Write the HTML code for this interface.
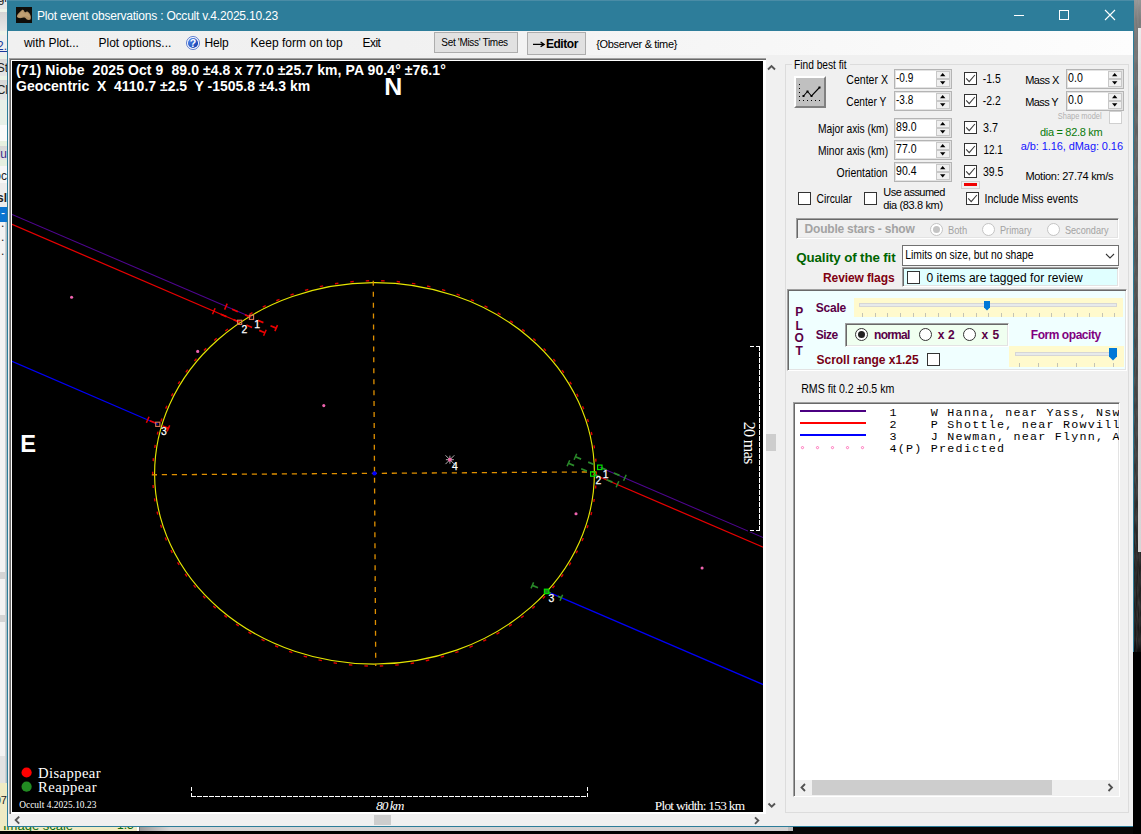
<!DOCTYPE html>
<html>
<head>
<meta charset="utf-8">
<title>Plot event observations</title>
<style>
html,body{margin:0;padding:0;}
body{width:1141px;height:834px;overflow:hidden;position:relative;background:#f0f0f0;font-family:"Liberation Sans",sans-serif;font-size:11px;color:#000;}
.abs{position:absolute;}
svg{position:absolute;overflow:visible;}
text{white-space:pre;}
</style>
</head>
<body>
<div class="abs" style="left:0px;top:0px;width:7px;height:9px;background:#e6e6e6;"></div>
<div class="abs" style="left:0px;top:9px;width:7px;height:3px;background:#eef4ea;"></div>
<div class="abs" style="left:0px;top:12px;width:7px;height:19px;background:linear-gradient(#d4d4d4,#e8e8e8);"></div>
<div class="abs" style="left:0px;top:31px;width:7px;height:4px;background:#eef4ea;"></div>
<div class="abs" style="left:0px;top:35px;width:7px;height:20px;background:#eeeeee;"></div>
<div class="abs" style="left:0px;top:55px;width:7px;height:4px;background:#eaf2e6;"></div>
<div class="abs" style="left:0px;top:59px;width:7px;height:17px;background:linear-gradient(#d8d8d8,#e6e6e6);"></div>
<div class="abs" style="left:0px;top:76px;width:7px;height:4px;background:#eaf2e6;"></div>
<div class="abs" style="left:0px;top:80px;width:7px;height:20px;background:linear-gradient(#d8d8d8,#e6e6e6);"></div>
<div class="abs" style="left:0px;top:100px;width:7px;height:25px;background:#e8f0e8;"></div>
<div class="abs" style="left:0px;top:125px;width:7px;height:16px;background:#fafafa;"></div>
<div class="abs" style="left:0px;top:141px;width:7px;height:5px;background:#e6f0e0;"></div>
<div class="abs" style="left:0px;top:146px;width:7px;height:14px;background:linear-gradient(#d6d6d6,#e4e4e4);"></div>
<div class="abs" style="left:0px;top:160px;width:7px;height:6px;background:#e6f0e0;"></div>
<div class="abs" style="left:0px;top:166px;width:7px;height:17px;background:#f6f6f6;"></div>
<div class="abs" style="left:0px;top:183px;width:7px;height:24px;background:#ececec;"></div>
<div class="abs" style="left:0px;top:207px;width:7px;height:15px;background:#0a74d0;"></div>
<div class="abs" style="left:0px;top:222px;width:7px;height:350px;background:#f3f3f3;"></div>
<div class="abs" style="left:0px;top:572px;width:7px;height:7px;background:#d4d4d4;"></div>
<div class="abs" style="left:0px;top:579px;width:7px;height:36px;background:#f3f3f3;"></div>
<div class="abs" style="left:0px;top:615px;width:7px;height:7px;background:#d4d4d4;"></div>
<div class="abs" style="left:0px;top:622px;width:7px;height:134px;background:#f3f3f3;"></div>
<div class="abs" style="left:0px;top:756px;width:7px;height:27px;background:#e2e2e2;"></div>
<div class="abs" style="left:0px;top:783px;width:7px;height:48px;background:#efebc4;"></div>
<div class="abs" style="left:5px;top:222px;width:2px;height:561px;background:linear-gradient(90deg,#dcdcdc,#9fb4bc);"></div>
<div class="abs" style="left:0;top:0;width:7px;height:834px;overflow:hidden;font-family:'Liberation Sans';font-size:12px;line-height:1;color:#222;white-space:nowrap;"><span style="position:absolute;right:0;top:-8px;">gi</span><span style="position:absolute;right:0;top:40px;color:#1a3a9a;text-decoration:underline;">2.</span><span style="position:absolute;right:-1px;top:62px;">St</span><span style="position:absolute;right:-1px;top:84px;">Cl</span><span style="position:absolute;right:0;top:148px;color:#3a2a8a;">clu</span><span style="position:absolute;right:0;top:170px;">oc</span><span style="position:absolute;right:0;top:192px;font-weight:bold;">sl</span><span style="position:absolute;left:1px;top:207px;color:#fff;">-</span><span style="position:absolute;left:1px;top:217px;">.</span><span style="position:absolute;left:1px;top:231px;">.</span><span style="position:absolute;left:1px;top:245px;">.</span><span style="position:absolute;right:0;top:795px;font-size:11px;">07</span></div>
<div class="abs" style="left:0px;top:831px;width:1141px;height:3px;background:#000;"></div>
<div class="abs" style="left:0px;top:827px;width:137px;height:4px;background:#efebc4;"></div>
<div class="abs" style="left:137px;top:827px;width:3px;height:4px;background:linear-gradient(90deg,#fff 0,#fff 50%,#777 51%);"></div>
<div class="abs" style="left:140px;top:827px;width:648px;height:4px;background:linear-gradient(90deg,#9a9a9a 0,#d6d6d6 30px,#d2d2d2 100%);"></div>
<div class="abs" style="left:788px;top:827px;width:5px;height:4px;background:#bdbdbd;"></div>
<div class="abs" style="left:793px;top:826px;width:348px;height:8px;background:#060606;"></div>
<div class="abs" style="left:0px;top:826px;width:138px;height:5px;overflow:hidden;font-family:'Liberation Sans';font-size:12px;line-height:1;color:#0a6a0a;white-space:nowrap;"><span style="position:absolute;left:3px;top:-7px;font-size:13px;">Image scale</span><span style="position:absolute;left:117px;top:-7px;">1.3</span></div>
<div class="abs" style="left:1133px;top:652px;width:8px;height:182px;background:#000;"></div>
<div class="abs" style="left:1134px;top:0px;width:7px;height:652px;background:linear-gradient(#969696 0,#7a7a7a 20px,#646464 100px,#525252 250px,#3a3a3a 450px,#222 552px,#1a1a1a 640px,#000 652px);"></div>
<svg style="left:1134px;top:0" width="7" height="652"><filter id="nz" x="0" y="0" width="100%" height="100%"><feTurbulence type="fractalNoise" baseFrequency="0.9 0.08" numOctaves="2" seed="3"/><feColorMatrix type="matrix" values="0 0 0 0 0.5  0 0 0 0 0.5  0 0 0 0 0.5  0.9 0 0 0 -0.25"/></filter><rect width="7" height="652" filter="url(#nz)" opacity="0.35"/></svg>
<div class="abs" style="left:1138px;top:28px;width:3px;height:524px;background:linear-gradient(#ececec 0,#e2e2e2 40px,#d6d6d6 100%);"></div>
<div class="abs" style="left:7px;top:0px;width:1127px;height:31px;background:#2d7d9a;"></div>
<div class="abs" style="left:7px;top:0px;width:1127px;height:1px;background:#4a8ca6;"></div>
<div class="abs" style="left:7px;top:31px;width:1127px;height:621px;background:#2d7d9a;"></div>
<div class="abs" style="left:7px;top:652px;width:1126px;height:175px;background:#2d7d9a;"></div>
<div class="abs" style="left:8px;top:31px;width:1125px;height:795px;background:#f0f0f0;"></div>
<svg style="left:16px;top:7px;" width="16" height="16" viewBox="0 0 16 16"><rect width="16" height="16" fill="#0f0d09"/><path d="M0.9 9.1 C1.5 6.5 4.5 4.5 6 2.9 C6.8 2.4 7.6 2.8 8 3.8 C8.3 4.8 8.8 5.4 9.5 5.2 C10.3 4.6 11.2 4.4 12 4.9 C13.5 5.8 14.6 7.8 14.8 9.6 C15 11 14.8 12.2 14.2 12.8 C13 13 11.8 12.9 10.8 12.5 C10 11.6 9.3 10.8 8.5 10.6 C7 10.6 5 11.4 3 11.1 C1.6 10.8 0.8 10 0.9 9.1 Z" fill="#b39468"/><path d="M2 9 C3 7 5 5.5 6.3 4 C7 5 7.5 6.3 9 6.6 C10.3 6 11.3 5.8 12.2 6.4 C13.2 7.6 13.8 9 13.8 10.5 C12.5 10 11 9.6 9.5 9.3 C7.5 9 5 10 3 10.2 Z" fill="#c4a577" opacity=".7"/></svg>
<svg style="left:1000px;top:0;" width="134" height="31" viewBox="0 0 134 31"><g stroke="#fff" stroke-width="1" fill="none" shape-rendering="crispEdges"><path d="M14 15.5H24"/><rect x="59.5" y="10.5" width="9" height="9"/></g><g stroke="#fff" stroke-width="1.1" fill="none"><path d="M105 10L115 20M115 10L105 20"/></g></svg>
<div class="abs" style="left:8px;top:31px;width:1125px;height:24px;background:linear-gradient(90deg,#f0f0f0 0%,#f1f1f1 35%,#fdfdfd 100%);"></div>
<svg style="left:186px;top:36px;" width="14" height="14" viewBox="0 0 14 14"><defs><linearGradient id="hg" x1="0" y1="0" x2="1" y2="1"><stop offset="0" stop-color="#5a90f0"/><stop offset="1" stop-color="#0a34a8"/></linearGradient></defs><circle cx="7" cy="7" r="6.5" fill="#fff" stroke="#4a6cc8" stroke-width="0.9"/><circle cx="7" cy="7" r="5.1" fill="url(#hg)"/><text x="7" y="10.7" text-anchor="middle" font-family="Liberation Sans" font-weight="bold" font-size="10.5" fill="#fff">?</text></svg>
<div class="abs" style="left:434px;top:32px;width:84px;height:21px;box-sizing:border-box;border:1px solid #adadad;background:#e1e1e1;"></div>
<div class="abs" style="left:527px;top:32px;width:59px;height:23px;box-sizing:border-box;border:1px solid #adadad;background:#e1e1e1;"></div>
<div class="abs" style="left:594px;top:37px;width:86px;height:14px;background:#f5f5f5;"></div>
<svg style="left:0;top:0" width="1141" height="834"><path d="M533 44.4H544M540.6 42L544.2 44.4L540.6 46.8" stroke="#000" stroke-width="1.3" fill="none"/></svg>
<div class="abs" style="left:9px;top:58px;width:757px;height:756px;box-sizing:border-box;border-top:1px solid #a0a0a0;border-left:1px solid #a0a0a0;box-shadow:inset 1px 1px 0 #696969;"></div>
<div class="abs" style="left:11px;top:60px;width:755px;height:754px;background:#fff;"></div>
<div class="abs" style="left:12px;top:61px;width:751px;height:751px;background:#000;"></div>
<div class="abs" style="left:766px;top:58px;width:15px;height:754px;background:#f0f0f0;"></div>
<div class="abs" style="left:766px;top:434px;width:10px;height:17px;background:#cdcdcd;"></div>
<div class="abs" style="left:9px;top:814px;width:772px;height:12px;background:#f0f0f0;"></div>
<div class="abs" style="left:374px;top:815px;width:17px;height:10px;background:#cdcdcd;"></div>
<svg style="left:0;top:0" width="1141" height="834"><g fill="none" stroke="#555" stroke-width="1.9"><path d="M768 69.5L771.5 66L775 69.5"/><path d="M768.5 803.5L771.7 806.7L775 803.5"/><path d="M19.2 816.6L15.7 820.1L19.2 823.6"/><path d="M755 817.3L758.3 820.6L755 823.9"/></g></svg>
<svg style="left:0;top:0;" width="1141" height="834" viewBox="0 0 1141 834"><defs><clipPath id="pc"><rect x="12" y="61" width="751" height="751"/></clipPath></defs><g clip-path="url(#pc)" fill="none"><line x1="12.0" y1="214.4" x2="251.5" y2="317.3" stroke="#4e0590" stroke-width="1.05" /><line x1="12.0" y1="224.3" x2="239.6" y2="322.3" stroke="#e80000" stroke-width="1.25" /><line x1="12.0" y1="361.2" x2="157.8" y2="424.3" stroke="#0000f8" stroke-width="1.25" /><line x1="599.8" y1="467.3" x2="764.0" y2="537.9" stroke="#4e0590" stroke-width="1.05" /><line x1="592.8" y1="474.0" x2="764.0" y2="547.6" stroke="#e80000" stroke-width="1.25" /><line x1="546.6" y1="591.4" x2="764.0" y2="684.9" stroke="#0000f8" stroke-width="1.25" /><g transform="rotate(-0.37 374.5 473.35)"><path d="M596.3 473.5L596.3 476.5M595.7 487.0L595.5 490.0M594.1 500.3L593.6 503.3M591.4 513.6L590.7 516.5M587.7 526.6L586.7 529.5M582.9 539.4L581.6 542.3M577.0 551.9L575.6 554.6M570.2 564.0L568.6 566.6M562.5 575.6L560.6 578.2M553.8 586.8L551.8 589.2M544.3 597.3L542.0 599.6M533.9 607.3L531.5 609.5M522.8 616.7L520.2 618.7M510.9 625.3L508.1 627.1M498.4 633.2L495.5 634.9M485.2 640.3L482.2 641.8M471.6 646.6L468.4 647.9M457.4 652.1L454.2 653.2M442.9 656.7L439.5 657.6M428.0 660.4L424.6 661.1M412.8 663.2L409.4 663.7M397.5 665.0L394.0 665.3M382.0 665.9L378.6 666.0M366.6 665.9L363.1 665.8M351.1 665.0L347.7 664.6M335.8 663.1L332.4 662.5M320.7 660.3L317.3 659.5M305.8 656.6L302.5 655.6M291.2 652.0L288.0 650.8M277.1 646.5L274.0 645.1M263.4 640.1L260.4 638.6M250.3 633.0L247.4 631.3M237.8 625.1L235.1 623.2M225.9 616.4L223.4 614.4M214.8 607.1L212.4 604.9M204.5 597.1L202.3 594.8M194.9 586.5L192.9 584.0M186.3 575.3L184.5 572.7M178.6 563.7L177.0 561.0M171.8 551.6L170.4 548.8M166.0 539.1L164.8 536.2M161.2 526.3L160.3 523.4M157.5 513.3L156.8 510.3M154.8 500.0L154.4 497.0M153.2 486.6L153.0 483.6M152.7 473.2L152.7 470.2M153.3 459.7L153.5 456.7M154.9 446.4L155.4 443.4M157.6 433.1L158.3 430.2M161.3 420.1L162.3 417.2M166.1 407.3L167.4 404.4M172.0 394.8L173.4 392.1M178.8 382.7L180.4 380.1M186.5 371.1L188.4 368.5M195.2 359.9L197.2 357.5M204.7 349.4L207.0 347.1M215.1 339.4L217.5 337.2M226.2 330.0L228.8 328.0M238.1 321.4L240.9 319.6M250.6 313.5L253.5 311.8M263.8 306.4L266.8 304.9M277.4 300.1L280.6 298.8M291.6 294.6L294.8 293.5M306.1 290.0L309.5 289.1M321.0 286.3L324.4 285.6M336.2 283.5L339.6 283.0M351.5 281.7L355.0 281.4M367.0 280.8L370.4 280.7M382.4 280.8L385.9 280.9M397.9 281.7L401.3 282.1M413.2 283.6L416.6 284.2M428.3 286.4L431.7 287.2M443.2 290.1L446.5 291.1M457.8 294.7L461.0 295.9M471.9 300.2L475.0 301.6M485.6 306.6L488.6 308.1M498.7 313.7L501.6 315.4M511.2 321.6L513.9 323.5M523.1 330.3L525.6 332.3M534.2 339.6L536.6 341.8M544.5 349.6L546.7 351.9M554.1 360.2L556.1 362.7M562.7 371.4L564.5 374.0M570.4 383.0L572.0 385.7M577.2 395.1L578.6 397.9M583.0 407.6L584.2 410.5M587.8 420.4L588.7 423.3M591.5 433.4L592.2 436.4M594.2 446.7L594.6 449.7M595.8 460.1L596.0 463.1" stroke="#e00000" stroke-width="1.4"/><ellipse cx="374.5" cy="473.35" rx="219.9" ry="190.7" stroke="#e4e400" stroke-width="1.15"/><line x1="151.79999999999998" y1="473.35" x2="596.5" y2="473.35" stroke="#e09000" stroke-width="1.3" stroke-dasharray="5.2 4.8"/><line x1="374.5" y1="280.75000000000006" x2="374.5" y2="666.05" stroke="#e09000" stroke-width="1.3" stroke-dasharray="5 5.94"/></g><circle cx="374.5" cy="473.35" r="2.2" fill="#0000ff"/><line x1="276.2" y1="328.1" x2="225.9" y2="306.6" stroke="#ee0000" stroke-width="1.7" stroke-dasharray="6.2 7.7"/><line x1="277.5" y1="325.1" x2="274.9" y2="331.1" stroke="#ee0000" stroke-width="1.5" /><line x1="227.2" y1="303.6" x2="224.6" y2="309.6" stroke="#ee0000" stroke-width="1.5" /><line x1="264.9" y1="332.8" x2="213.8" y2="311.3" stroke="#ee0000" stroke-width="1.7" stroke-dasharray="6.2 7.7"/><line x1="266.2" y1="329.8" x2="263.6" y2="335.8" stroke="#ee0000" stroke-width="1.5" /><line x1="215.1" y1="308.3" x2="212.5" y2="314.3" stroke="#ee0000" stroke-width="1.5" /><line x1="168.4" y1="428.4" x2="147.7" y2="419.8" stroke="#ee0000" stroke-width="1.7" stroke-dasharray="6.2 7.7"/><line x1="169.7" y1="425.4" x2="167.1" y2="431.4" stroke="#ee0000" stroke-width="1.5" /><line x1="149.0" y1="416.8" x2="146.4" y2="422.8" stroke="#ee0000" stroke-width="1.5" /><line x1="575.4" y1="456.7" x2="624.9" y2="477.7" stroke="#2a8a2a" stroke-width="1.7" stroke-dasharray="6.2 7.7"/><line x1="576.7" y1="453.7" x2="574.1" y2="459.7" stroke="#2a8a2a" stroke-width="1.5" /><line x1="626.2" y1="474.7" x2="623.6" y2="480.7" stroke="#2a8a2a" stroke-width="1.5" /><line x1="568.4" y1="463.2" x2="617.5" y2="484.3" stroke="#2a8a2a" stroke-width="1.7" stroke-dasharray="6.2 7.7"/><line x1="569.7" y1="460.2" x2="567.1" y2="466.2" stroke="#2a8a2a" stroke-width="1.5" /><line x1="618.8" y1="481.3" x2="616.2" y2="487.3" stroke="#2a8a2a" stroke-width="1.5" /><line x1="532.3" y1="585.4" x2="561.3" y2="597.7" stroke="#2a8a2a" stroke-width="1.7" stroke-dasharray="6.2 7.7"/><line x1="533.6" y1="582.4" x2="531.0" y2="588.4" stroke="#2a8a2a" stroke-width="1.5" /><line x1="562.6" y1="594.7" x2="560.0" y2="600.7" stroke="#2a8a2a" stroke-width="1.5" /><rect x="249.4" y="315.2" width="4.2" height="4.2" stroke="#e07858" stroke-width="1.1"/><rect x="237.5" y="320.2" width="4.2" height="4.2" stroke="#e07858" stroke-width="1.1"/><rect x="155.7" y="422.2" width="4.2" height="4.2" stroke="#e07858" stroke-width="1.1"/><rect x="597.6" y="465.1" width="4.4" height="4.4" stroke="#00e000" stroke-width="1.2"/><rect x="590.6" y="471.8" width="4.4" height="4.4" stroke="#00e000" stroke-width="1.2"/><rect x="544.4" y="589.2" width="4.4" height="4.4" fill="#1e8a1e" stroke="#00e000" stroke-width="1.2"/><circle cx="71.6" cy="297.3" r="1.55" fill="#f064b0"/><circle cx="197.7" cy="351.4" r="1.55" fill="#f064b0"/><circle cx="323.8" cy="405.6" r="1.55" fill="#f064b0"/><circle cx="576.0" cy="513.8" r="1.55" fill="#f064b0"/><circle cx="702.1" cy="568.0" r="1.55" fill="#f064b0"/><g stroke="#c4c4c4" stroke-width="0.9"><path d="M445.9 459.7H453.9M449.9 455.7V463.7M445.5 455.3L454.3 464.1M445.5 464.1L454.3 455.3"/></g><circle cx="449.9" cy="459.7" r="1.9" fill="#f264a6"/><g stroke="#000" stroke-width="3" stroke-linecap="square"><path d="M191.5 796.5H587.5M191.5 796.5V786.5M587.5 796.5V786.5M759.5 346.5V530.5M759.5 346.5H749.5M759.5 530.5H749.5"/></g><g stroke="#fff" stroke-width="1" shape-rendering="crispEdges"><path d="M191 796.5H588" stroke-dasharray="4.5 1.5"/><path d="M191.5 797V785.6M587.5 797V785.6" stroke-dasharray="4.5 1.5"/><path d="M759.5 346V531" stroke-dasharray="4.5 1.5"/><path d="M760 346.5H749.5M760 530.5H749.5" stroke-dasharray="4.5 1.5"/></g><circle cx="26.6" cy="772.5" r="5.1" fill="#ff0000"/><circle cx="26.6" cy="786.7" r="5.1" fill="#228b22"/></g></svg>
<div class="abs" style="left:785px;top:64px;width:344px;height:749px;box-sizing:border-box;border:1px solid #dcdcdc;"></div>
<div class="abs" style="left:792px;top:59px;width:58px;height:12px;background:#f0f0f0;"></div>
<div class="abs" style="left:794px;top:76px;width:32px;height:32px;box-sizing:border-box;background:#c0c0c0;border-top:2px solid #fff;border-left:2px solid #fff;border-right:2px solid #808080;border-bottom:2px solid #808080;"></div>
<svg style="left:794px;top:76px" width="32" height="32" viewBox="0 0 32 32"><g fill="#000"><rect x="5" y="8" width="1" height="1"/><rect x="5" y="12" width="1" height="1"/><rect x="5" y="16" width="1" height="1"/><rect x="5" y="20" width="1" height="1"/><rect x="5" y="24" width="1" height="1"/><rect x="9" y="24" width="1" height="1"/><rect x="13" y="24" width="1" height="1"/><rect x="17" y="24" width="1" height="1"/><rect x="21" y="24" width="1" height="1"/><rect x="25" y="24" width="1" height="1"/></g><path d="M9.5 20L13.5 15.5L17.5 20L25.5 11.5" stroke="#000" stroke-width="1.1" fill="none"/><g fill="#000"><rect x="8.5" y="19" width="2" height="2"/><rect x="12.5" y="14.5" width="2" height="2"/><rect x="16.5" y="19" width="2" height="2"/><rect x="24.5" y="10.5" width="2" height="2"/></g></svg>
<div class="abs" style="left:894px;top:69px;width:58px;height:20px;box-sizing:border-box;border:1px solid #b4b4b4;background:#fff;box-shadow:inset 0 0 0 1px #e3e3e3;"></div>
<div class="abs" style="left:936px;top:71px;width:14px;height:16px;box-sizing:border-box;background:#f0f0f0;border:1px solid #c8c8c8;"></div>
<div class="abs" style="left:936px;top:78px;width:14px;height:2px;background:#c8c8c8;"></div>
<svg style="left:936px;top:71px" width="14" height="16" viewBox="0 0 14 16"><path d="M4 5.2L6.7 2L9.4 5.2Z M4 10.2L6.7 13.4L9.4 10.2Z" fill="#000"/></svg>
<div class="abs" style="left:964px;top:72px;width:13px;height:13px;box-sizing:border-box;border:1px solid #333;background:#fff;"></div>
<svg style="left:964px;top:72px" width="13" height="13" viewBox="0 0 13 13"><path d="M2.2 6.3L5.2 9.6L10.9 3" stroke="#3a3a3a" stroke-width="1.1" fill="none"/></svg>
<div class="abs" style="left:894px;top:91px;width:58px;height:20px;box-sizing:border-box;border:1px solid #b4b4b4;background:#fff;box-shadow:inset 0 0 0 1px #e3e3e3;"></div>
<div class="abs" style="left:936px;top:93px;width:14px;height:16px;box-sizing:border-box;background:#f0f0f0;border:1px solid #c8c8c8;"></div>
<div class="abs" style="left:936px;top:100px;width:14px;height:2px;background:#c8c8c8;"></div>
<svg style="left:936px;top:93px" width="14" height="16" viewBox="0 0 14 16"><path d="M4 5.2L6.7 2L9.4 5.2Z M4 10.2L6.7 13.4L9.4 10.2Z" fill="#000"/></svg>
<div class="abs" style="left:964px;top:94px;width:13px;height:13px;box-sizing:border-box;border:1px solid #333;background:#fff;"></div>
<svg style="left:964px;top:94px" width="13" height="13" viewBox="0 0 13 13"><path d="M2.2 6.3L5.2 9.6L10.9 3" stroke="#3a3a3a" stroke-width="1.1" fill="none"/></svg>
<div class="abs" style="left:894px;top:118px;width:58px;height:20px;box-sizing:border-box;border:1px solid #b4b4b4;background:#fff;box-shadow:inset 0 0 0 1px #e3e3e3;"></div>
<div class="abs" style="left:936px;top:120px;width:14px;height:16px;box-sizing:border-box;background:#f0f0f0;border:1px solid #c8c8c8;"></div>
<div class="abs" style="left:936px;top:127px;width:14px;height:2px;background:#c8c8c8;"></div>
<svg style="left:936px;top:120px" width="14" height="16" viewBox="0 0 14 16"><path d="M4 5.2L6.7 2L9.4 5.2Z M4 10.2L6.7 13.4L9.4 10.2Z" fill="#000"/></svg>
<div class="abs" style="left:964px;top:121px;width:13px;height:13px;box-sizing:border-box;border:1px solid #333;background:#fff;"></div>
<svg style="left:964px;top:121px" width="13" height="13" viewBox="0 0 13 13"><path d="M2.2 6.3L5.2 9.6L10.9 3" stroke="#3a3a3a" stroke-width="1.1" fill="none"/></svg>
<div class="abs" style="left:894px;top:140px;width:58px;height:20px;box-sizing:border-box;border:1px solid #b4b4b4;background:#fff;box-shadow:inset 0 0 0 1px #e3e3e3;"></div>
<div class="abs" style="left:936px;top:142px;width:14px;height:16px;box-sizing:border-box;background:#f0f0f0;border:1px solid #c8c8c8;"></div>
<div class="abs" style="left:936px;top:149px;width:14px;height:2px;background:#c8c8c8;"></div>
<svg style="left:936px;top:142px" width="14" height="16" viewBox="0 0 14 16"><path d="M4 5.2L6.7 2L9.4 5.2Z M4 10.2L6.7 13.4L9.4 10.2Z" fill="#000"/></svg>
<div class="abs" style="left:964px;top:143px;width:13px;height:13px;box-sizing:border-box;border:1px solid #333;background:#fff;"></div>
<svg style="left:964px;top:143px" width="13" height="13" viewBox="0 0 13 13"><path d="M2.2 6.3L5.2 9.6L10.9 3" stroke="#3a3a3a" stroke-width="1.1" fill="none"/></svg>
<div class="abs" style="left:894px;top:162px;width:58px;height:20px;box-sizing:border-box;border:1px solid #b4b4b4;background:#fff;box-shadow:inset 0 0 0 1px #e3e3e3;"></div>
<div class="abs" style="left:936px;top:164px;width:14px;height:16px;box-sizing:border-box;background:#f0f0f0;border:1px solid #c8c8c8;"></div>
<div class="abs" style="left:936px;top:171px;width:14px;height:2px;background:#c8c8c8;"></div>
<svg style="left:936px;top:164px" width="14" height="16" viewBox="0 0 14 16"><path d="M4 5.2L6.7 2L9.4 5.2Z M4 10.2L6.7 13.4L9.4 10.2Z" fill="#000"/></svg>
<div class="abs" style="left:964px;top:165px;width:13px;height:13px;box-sizing:border-box;border:1px solid #333;background:#fff;"></div>
<svg style="left:964px;top:165px" width="13" height="13" viewBox="0 0 13 13"><path d="M2.2 6.3L5.2 9.6L10.9 3" stroke="#3a3a3a" stroke-width="1.1" fill="none"/></svg>
<div class="abs" style="left:1066px;top:69px;width:58px;height:20px;box-sizing:border-box;border:1px solid #b4b4b4;background:#fff;box-shadow:inset 0 0 0 1px #e3e3e3;"></div>
<div class="abs" style="left:1108px;top:71px;width:14px;height:16px;box-sizing:border-box;background:#f0f0f0;border:1px solid #c8c8c8;"></div>
<div class="abs" style="left:1108px;top:78px;width:14px;height:2px;background:#c8c8c8;"></div>
<svg style="left:1108px;top:71px" width="14" height="16" viewBox="0 0 14 16"><path d="M4 5.2L6.7 2L9.4 5.2Z M4 10.2L6.7 13.4L9.4 10.2Z" fill="#000"/></svg>
<div class="abs" style="left:1066px;top:91px;width:58px;height:20px;box-sizing:border-box;border:1px solid #b4b4b4;background:#fff;box-shadow:inset 0 0 0 1px #e3e3e3;"></div>
<div class="abs" style="left:1108px;top:93px;width:14px;height:16px;box-sizing:border-box;background:#f0f0f0;border:1px solid #c8c8c8;"></div>
<div class="abs" style="left:1108px;top:100px;width:14px;height:2px;background:#c8c8c8;"></div>
<svg style="left:1108px;top:93px" width="14" height="16" viewBox="0 0 14 16"><path d="M4 5.2L6.7 2L9.4 5.2Z M4 10.2L6.7 13.4L9.4 10.2Z" fill="#000"/></svg>
<div class="abs" style="left:1109px;top:111px;width:13px;height:13px;box-sizing:border-box;border:1px solid #d0d0d0;background:#fff;"></div>
<div class="abs" style="left:961px;top:181px;width:19px;height:8px;box-sizing:border-box;border:1px solid #d0d0d0;"></div>
<div class="abs" style="left:964px;top:183px;width:13px;height:3px;background:#f00000;"></div>
<div class="abs" style="left:798px;top:192px;width:13px;height:13px;box-sizing:border-box;border:1px solid #333;background:#fff;"></div>
<div class="abs" style="left:864px;top:192px;width:13px;height:13px;box-sizing:border-box;border:1px solid #333;background:#fff;"></div>
<div class="abs" style="left:966px;top:192px;width:13px;height:13px;box-sizing:border-box;border:1px solid #333;background:#fff;"></div>
<svg style="left:966px;top:192px" width="13" height="13" viewBox="0 0 13 13"><path d="M2.2 6.3L5.2 9.6L10.9 3" stroke="#3a3a3a" stroke-width="1.1" fill="none"/></svg>
<div class="abs" style="left:796px;top:218px;width:323px;height:21px;box-sizing:border-box;border-top:1px solid #a0a0a0;border-left:1px solid #a0a0a0;border-right:1px solid #fff;border-bottom:1px solid #fff;box-shadow:inset 1px 1px 0 #696969,inset -1px -1px 0 #e3e3e3;"></div>
<div class="abs" style="left:930px;top:223px;width:13px;height:13px;box-sizing:border-box;border:1px solid #c4c4c4;border-radius:50%;background:#fff;"></div>
<div class="abs" style="left:933px;top:226px;width:7px;height:7px;border-radius:50%;background:#c4c4c4;"></div>
<div class="abs" style="left:982px;top:223px;width:13px;height:13px;box-sizing:border-box;border:1px solid #c4c4c4;border-radius:50%;background:#fff;"></div>
<div class="abs" style="left:1047px;top:223px;width:13px;height:13px;box-sizing:border-box;border:1px solid #c4c4c4;border-radius:50%;background:#fff;"></div>
<div class="abs" style="left:902px;top:245px;width:217px;height:21px;box-sizing:border-box;border:1px solid #707070;background:#fff;"></div>
<svg style="left:1104px;top:251px" width="12" height="10" viewBox="0 0 12 10"><path d="M2 3L6 7L10 3" stroke="#333" stroke-width="1.1" fill="none"/></svg>
<div class="abs" style="left:902px;top:267px;width:217px;height:20px;box-sizing:border-box;border-top:1px solid #a0a0a0;border-left:1px solid #a0a0a0;border-right:1px solid #fff;border-bottom:1px solid #fff;box-shadow:inset 1px 1px 0 #696969,inset -1px -1px 0 #e3e3e3;background:#e0ffff;"></div>
<div class="abs" style="left:907px;top:271px;width:13px;height:13px;box-sizing:border-box;border:1px solid #333;background:#fff;"></div>
<div class="abs" style="left:787px;top:289px;width:340px;height:82px;box-sizing:border-box;border-top:1px solid #a0a0a0;border-left:1px solid #a0a0a0;border-right:1px solid #fff;border-bottom:1px solid #fff;box-shadow:inset 1px 1px 0 #696969,inset -1px -1px 0 #e3e3e3;background:#f0ffff;"></div>
<div class="abs" style="left:927px;top:353px;width:13px;height:13px;box-sizing:border-box;border:1px solid #333;background:#fff;"></div>
<div class="abs" style="left:854px;top:298px;width:269px;height:19px;background:#fffacd;"></div>
<div class="abs" style="left:859px;top:303px;width:258px;height:4px;box-sizing:border-box;border:1px solid #d6d6d6;background:#e7eaea;"></div>
<svg style="left:0;top:0" width="1141" height="834"><g fill="#c4c4b4" shape-rendering="crispEdges"><rect x="862.0" y="313" width="1" height="4"/><rect x="874.6" y="313" width="1" height="4"/><rect x="887.2" y="313" width="1" height="4"/><rect x="899.9" y="313" width="1" height="4"/><rect x="912.5" y="313" width="1" height="4"/><rect x="925.1" y="313" width="1" height="4"/><rect x="937.7" y="313" width="1" height="4"/><rect x="950.3" y="313" width="1" height="4"/><rect x="963.0" y="313" width="1" height="4"/><rect x="975.6" y="313" width="1" height="4"/><rect x="988.2" y="313" width="1" height="4"/><rect x="1000.8" y="313" width="1" height="4"/><rect x="1013.4" y="313" width="1" height="4"/><rect x="1026.1" y="313" width="1" height="4"/><rect x="1038.7" y="313" width="1" height="4"/><rect x="1051.3" y="313" width="1" height="4"/><rect x="1063.9" y="313" width="1" height="4"/><rect x="1076.5" y="313" width="1" height="4"/><rect x="1089.2" y="313" width="1" height="4"/><rect x="1101.8" y="313" width="1" height="4"/><rect x="1114.4" y="313" width="1" height="4"/></g><path d="M984 301H990V307.5L987 310.5L984 307.5Z" fill="#0078d7"/></svg>
<div class="abs" style="left:845px;top:323px;width:164px;height:24px;box-sizing:border-box;border-top:1px solid #a0a0a0;border-left:1px solid #a0a0a0;border-right:1px solid #fff;border-bottom:1px solid #fff;box-shadow:inset 1px 1px 0 #696969,inset -1px -1px 0 #e3e3e3;background:#f0fff0;"></div>
<div class="abs" style="left:855px;top:328px;width:13px;height:13px;box-sizing:border-box;border:1px solid #333;border-radius:50%;background:#fff;"></div>
<div class="abs" style="left:858px;top:331px;width:7px;height:7px;border-radius:50%;background:#222;"></div>
<div class="abs" style="left:919px;top:328px;width:13px;height:13px;box-sizing:border-box;border:1px solid #333;border-radius:50%;background:#fff;"></div>
<div class="abs" style="left:963px;top:328px;width:13px;height:13px;box-sizing:border-box;border:1px solid #333;border-radius:50%;background:#fff;"></div>
<div class="abs" style="left:1009px;top:346px;width:115px;height:21px;background:#fffacd;"></div>
<div class="abs" style="left:1015px;top:352px;width:102px;height:4px;box-sizing:border-box;border:1px solid #d6d6d6;background:#e7eaea;"></div>
<svg style="left:0;top:0" width="1141" height="834"><g fill="#c4c4b4" shape-rendering="crispEdges"><rect x="1019.0" y="363" width="1" height="4"/><rect x="1037.8" y="363" width="1" height="4"/><rect x="1056.7" y="363" width="1" height="4"/><rect x="1075.5" y="363" width="1" height="4"/><rect x="1094.4" y="363" width="1" height="4"/><rect x="1113.2" y="363" width="1" height="4"/></g><path d="M1109 348H1117V356.5L1113 360.5L1109 356.5Z" fill="#0078d7"/></svg>
<div class="abs" style="left:793px;top:402px;width:327px;height:395px;box-sizing:border-box;border-top:1px solid #a0a0a0;border-left:1px solid #a0a0a0;border-right:1px solid #fff;border-bottom:1px solid #fff;box-shadow:inset 1px 1px 0 #696969,inset -1px -1px 0 #e3e3e3;background:#fff;"></div>
<div class="abs" style="left:795px;top:780px;width:324px;height:16px;background:#f0f0f0;"></div>
<div class="abs" style="left:812px;top:780px;width:240px;height:15px;background:#cdcdcd;"></div>
<svg style="left:0;top:0" width="1141" height="834"><g fill="none" stroke="#505050" stroke-width="1.8"><path d="M805 784L801.5 787.5L805 791"/><path d="M1108.5 784L1112 787.5L1108.5 791"/></g><g stroke-width="2" shape-rendering="crispEdges"><path d="M800 411H866" stroke="#4b0082"/><path d="M800 423H866" stroke="#ff0000"/><path d="M800 435H866" stroke="#0000ff"/></g><g fill="none" stroke="#ff69b4" stroke-width="0.9"><circle cx="802.5" cy="447.6" r="1.1"/><circle cx="817.5" cy="447.6" r="1.1"/><circle cx="832.5" cy="447.6" r="1.1"/><circle cx="847.5" cy="447.6" r="1.1"/><circle cx="862.5" cy="447.6" r="1.1"/></g></svg>
<svg style="left:0;top:0" width="1141" height="834" viewBox="0 0 1141 834" xml:space="preserve"><defs><clipPath id="lc"><rect x="795" y="404" width="324" height="376"/></clipPath></defs><g clip-path="url(#lc)"><text x="889.6" y="416" style="font-family:'Liberation Mono';font-size:11.7px;letter-spacing:1.24px;white-space:pre;">1    W Hanna, near Yass, Nsw</text><text x="889.6" y="428" style="font-family:'Liberation Mono';font-size:11.7px;letter-spacing:1.24px;white-space:pre;">2    P Shottle, near Rowville</text><text x="889.6" y="440" style="font-family:'Liberation Mono';font-size:11.7px;letter-spacing:1.24px;white-space:pre;">3    J Newman, near Flynn, AC</text><text x="889.6" y="452" style="font-family:'Liberation Mono';font-size:11.7px;letter-spacing:1.24px;white-space:pre;">4(P) Predicted</text></g></svg>
<svg style="left:0;top:0" width="1141" height="834" viewBox="0 0 1141 834" xml:space="preserve"><text x="37.00" y="20" fill="#fff" style="font-family:'Liberation Sans';font-size:12px;letter-spacing:-0.205px;" >Plot event observations : Occult v.4.2025.10.23</text>
<text x="24.00" y="47" fill="#000" style="font-family:'Liberation Sans';font-size:12px;letter-spacing:-0.047px;" >with Plot...</text>
<text x="98.50" y="47" fill="#000" style="font-family:'Liberation Sans';font-size:12px;letter-spacing:0.009px;" >Plot options...</text>
<text x="204.50" y="47" fill="#000" style="font-family:'Liberation Sans';font-size:12px;letter-spacing:-0.169px;" >Help</text>
<text x="250.50" y="47" fill="#000" style="font-family:'Liberation Sans';font-size:12px;letter-spacing:0.008px;" >Keep form on top</text>
<text x="362.50" y="47" fill="#000" style="font-family:'Liberation Sans';font-size:12px;letter-spacing:-0.557px;" >Exit</text>
<text x="441.30" y="46" fill="#000" style="font-family:'Liberation Sans';font-size:10px;letter-spacing:-0.319px;" >Set &#x27;Miss&#x27; Times</text>
<text x="545.90" y="48" fill="#000" style="font-family:'Liberation Sans';font-size:12px;font-weight:bold;letter-spacing:-0.439px;" >Editor</text>
<text x="596.20" y="48" fill="#000" style="font-family:'Liberation Sans';font-size:11px;letter-spacing:-0.352px;" >{Observer &amp; time}</text>
<text x="16.10" y="75" fill="#fff" style="font-family:'Liberation Sans';font-size:14px;font-weight:bold;letter-spacing:0.085px;" >(71) Niobe  2025 Oct 9  89.0 ±4.8 x 77.0 ±25.7 km, PA 90.4° ±76.1°</text>
<text x="16.10" y="91" fill="#fff" style="font-family:'Liberation Sans';font-size:14px;font-weight:bold;letter-spacing:-0.005px;" >Geocentric  X  4110.7 ±2.5  Y -1505.8 ±4.3 km</text>
<text x="-1.00" y="0" fill="#fff" style="font-family:'Liberation Sans';font-size:24px;font-weight:bold;" transform="translate(385.30 95) scale(1.040 1)">N</text>
<text x="-1.00" y="0" fill="#fff" style="font-family:'Liberation Sans';font-size:24px;font-weight:bold;" transform="translate(21.30 452) scale(0.987 1)">E</text>
<text x="254.30" y="328" fill="#fff" style="font-family:'Liberation Sans';font-size:10.4px;" stroke="#fff" stroke-width="0.25">1</text>
<text x="241.60" y="333" fill="#fff" style="font-family:'Liberation Sans';font-size:10.4px;" stroke="#fff" stroke-width="0.25">2</text>
<text x="161.00" y="435" fill="#fff" style="font-family:'Liberation Sans';font-size:10.4px;" stroke="#fff" stroke-width="0.25">3</text>
<text x="602.80" y="478" fill="#fff" style="font-family:'Liberation Sans';font-size:10.4px;" stroke="#fff" stroke-width="0.25">1</text>
<text x="595.50" y="484" fill="#fff" style="font-family:'Liberation Sans';font-size:10.4px;" stroke="#fff" stroke-width="0.25">2</text>
<text x="548.50" y="602" fill="#fff" style="font-family:'Liberation Sans';font-size:10.4px;" stroke="#fff" stroke-width="0.25">3</text>
<text x="451.90" y="470" fill="#fff" style="font-family:'Liberation Sans';font-size:10.4px;" stroke="#fff" stroke-width="0.25">4</text>
<text x="38.10" y="778" fill="#fff" style="font-family:'Liberation Serif';font-size:14.67px;letter-spacing:0.384px;" >Disappear</text>
<text x="38.10" y="792" fill="#fff" style="font-family:'Liberation Serif';font-size:14.67px;letter-spacing:0.450px;" >Reappear</text>
<text x="19.20" y="808" fill="#fff" style="font-family:'Liberation Serif';font-size:9.33px;letter-spacing:0.055px;" >Occult 4.2025.10.23</text>
<text x="376.10" y="810" fill="#fff" style="font-family:'Liberation Serif';font-size:13.33px;font-style:italic;letter-spacing:-0.994px;" >80 km</text>
<text x="654.70" y="810" fill="#fff" style="font-family:'Liberation Serif';font-size:13.33px;letter-spacing:-0.712px;" >Plot width: 153 km</text>
<text x="0.00" y="0" fill="#fff" style="font-family:'Liberation Serif';font-size:16px;letter-spacing:-0.629px;" transform="translate(744 421.7) rotate(90)">20 mas</text>
<text x="0.00" y="0" fill="#000" style="font-family:'Liberation Sans';font-size:12px;" transform="translate(794.00 69) scale(0.850 1)">Find best fit</text>
<text x="0.00" y="0" fill="#000" style="font-family:'Liberation Sans';font-size:12px;" transform="translate(846.30 84) scale(0.881 1)">Center X</text>
<text x="0.00" y="0" fill="#000" style="font-family:'Liberation Sans';font-size:12px;" transform="translate(846.30 106) scale(0.849 1)">Center Y</text>
<text x="0.00" y="0" fill="#000" style="font-family:'Liberation Sans';font-size:12px;" transform="translate(818.00 133) scale(0.855 1)">Major axis (km)</text>
<text x="0.00" y="0" fill="#000" style="font-family:'Liberation Sans';font-size:12px;" transform="translate(818.00 155) scale(0.855 1)">Minor axis (km)</text>
<text x="0.00" y="0" fill="#000" style="font-family:'Liberation Sans';font-size:12px;" transform="translate(836.50 177) scale(0.872 1)">Orientation</text>
<text x="0.00" y="0" fill="#000" style="font-family:'Liberation Sans';font-size:12px;" transform="translate(896.00 82) scale(0.838 1)">-0.9</text>
<text x="0.00" y="0" fill="#000" style="font-family:'Liberation Sans';font-size:12px;" transform="translate(896.00 104) scale(0.838 1)">-3.8</text>
<text x="0.00" y="0" fill="#000" style="font-family:'Liberation Sans';font-size:12px;" transform="translate(896.10 131) scale(0.874 1)">89.0</text>
<text x="0.00" y="0" fill="#000" style="font-family:'Liberation Sans';font-size:12px;" transform="translate(896.10 153) scale(0.874 1)">77.0</text>
<text x="0.00" y="0" fill="#000" style="font-family:'Liberation Sans';font-size:12px;" transform="translate(896.10 175) scale(0.874 1)">90.4</text>
<text x="0.00" y="0" fill="#000" style="font-family:'Liberation Sans';font-size:12px;" transform="translate(982.80 83) scale(0.867 1)">-1.5</text>
<text x="0.00" y="0" fill="#000" style="font-family:'Liberation Sans';font-size:12px;" transform="translate(982.80 105) scale(0.867 1)">-2.2</text>
<text x="0.00" y="0" fill="#000" style="font-family:'Liberation Sans';font-size:12px;" transform="translate(983.00 132) scale(0.900 1)">3.7</text>
<text x="0.00" y="0" fill="#000" style="font-family:'Liberation Sans';font-size:12px;" transform="translate(983.50 154) scale(0.823 1)">12.1</text>
<text x="0.00" y="0" fill="#000" style="font-family:'Liberation Sans';font-size:12px;" transform="translate(983.00 176) scale(0.870 1)">39.5</text>
<text x="1025.20" y="84" fill="#000" style="font-family:'Liberation Sans';font-size:11px;letter-spacing:-0.507px;" >Mass X</text>
<text x="1025.20" y="106" fill="#000" style="font-family:'Liberation Sans';font-size:11px;letter-spacing:-0.607px;" >Mass Y</text>
<text x="0.00" y="0" fill="#000" style="font-family:'Liberation Sans';font-size:12px;" transform="translate(1068.10 82) scale(0.882 1)">0.0</text>
<text x="0.00" y="0" fill="#000" style="font-family:'Liberation Sans';font-size:12px;" transform="translate(1068.10 104) scale(0.882 1)">0.0</text>
<text x="0.00" y="0" fill="#b0b0b0" style="font-family:'Liberation Sans';font-size:9.3px;" transform="translate(1057.80 119) scale(0.802 1)">Shape model</text>
<text x="1040.00" y="136" fill="#0a7a0a" style="font-family:'Liberation Sans';font-size:11px;letter-spacing:-0.307px;" >dia = 82.8 km</text>
<text x="1020.80" y="150" fill="#1414ff" style="font-family:'Liberation Sans';font-size:11px;letter-spacing:-0.087px;" >a/b: 1.16, dMag: 0.16</text>
<text x="1025.40" y="180" fill="#000" style="font-family:'Liberation Sans';font-size:11px;letter-spacing:-0.284px;" >Motion: 27.74 km/s</text>
<text x="0.00" y="0" fill="#000" style="font-family:'Liberation Sans';font-size:12px;" transform="translate(816.60 203) scale(0.856 1)">Circular</text>
<text x="883.30" y="196" fill="#000" style="font-family:'Liberation Sans';font-size:11px;letter-spacing:-0.523px;" >Use assumed</text>
<text x="883.30" y="209" fill="#000" style="font-family:'Liberation Sans';font-size:11px;letter-spacing:-0.369px;" >dia (83.8 km)</text>
<text x="-1.00" y="0" fill="#000" style="font-family:'Liberation Sans';font-size:12px;" transform="translate(985.30 203) scale(0.890 1)">Include Miss events</text>
<text x="804.60" y="233" fill="#a3a3a3" style="font-family:'Liberation Sans';font-size:12px;font-weight:bold;letter-spacing:-0.216px;" >Double stars - show</text>
<text x="0.00" y="0" fill="#a3a3a3" style="font-family:'Liberation Sans';font-size:10px;" transform="translate(947.90 234) scale(0.935 1)">Both</text>
<text x="0.00" y="0" fill="#a3a3a3" style="font-family:'Liberation Sans';font-size:10px;" transform="translate(1000.00 234) scale(0.917 1)">Primary</text>
<text x="0.00" y="0" fill="#a3a3a3" style="font-family:'Liberation Sans';font-size:10px;" transform="translate(1064.90 234) scale(0.916 1)">Secondary</text>
<text x="796.30" y="262" fill="#006400" style="font-family:'Liberation Sans';font-size:13.33px;font-weight:bold;letter-spacing:-0.124px;" >Quality of the fit</text>
<text x="0.00" y="0" fill="#000" style="font-family:'Liberation Sans';font-size:12px;" transform="translate(905.20 259) scale(0.864 1)">Limits on size, but no shape</text>
<text x="823.00" y="282" fill="#800010" style="font-family:'Liberation Sans';font-size:12px;font-weight:bold;letter-spacing:-0.102px;" >Review flags</text>
<text x="926.50" y="282" fill="#000" style="font-family:'Liberation Sans';font-size:12px;letter-spacing:0.047px;" >0 items are tagged for review</text>
<text x="799.20" y="316" fill="#5a0046" style="font-family:'Liberation Sans';font-size:12px;font-weight:bold;" text-anchor="middle">P</text>
<text x="799.20" y="330" fill="#5a0046" style="font-family:'Liberation Sans';font-size:12px;font-weight:bold;" text-anchor="middle">L</text>
<text x="799.20" y="342" fill="#5a0046" style="font-family:'Liberation Sans';font-size:12px;font-weight:bold;" text-anchor="middle">O</text>
<text x="799.20" y="355" fill="#5a0046" style="font-family:'Liberation Sans';font-size:12px;font-weight:bold;" text-anchor="middle">T</text>
<text x="815.80" y="312" fill="#5a0046" style="font-family:'Liberation Sans';font-size:12px;font-weight:bold;letter-spacing:-0.221px;" >Scale</text>
<text x="815.80" y="339" fill="#5a0046" style="font-family:'Liberation Sans';font-size:12px;font-weight:bold;letter-spacing:-0.513px;" >Size</text>
<text x="816.60" y="364" fill="#780014" style="font-family:'Liberation Sans';font-size:12px;font-weight:bold;letter-spacing:-0.038px;" >Scroll range x1.25</text>
<text x="874.10" y="339" fill="#5a0046" style="font-family:'Liberation Sans';font-size:12px;font-weight:bold;letter-spacing:-0.775px;" >normal</text>
<text x="937.70" y="339" fill="#5a0046" style="font-family:'Liberation Sans';font-size:12px;font-weight:bold;letter-spacing:0.096px;" >x 2</text>
<text x="981.60" y="339" fill="#5a0046" style="font-family:'Liberation Sans';font-size:12px;font-weight:bold;letter-spacing:0.446px;" >x 5</text>
<text x="1030.80" y="339" fill="#800080" style="font-family:'Liberation Sans';font-size:12px;font-weight:bold;letter-spacing:-0.452px;" >Form opacity</text>
<text x="0.00" y="0" fill="#000" style="font-family:'Liberation Sans';font-size:12px;" transform="translate(801.20 393) scale(0.885 1)">RMS fit 0.2 ±0.5 km</text></svg>
</body>
</html>
